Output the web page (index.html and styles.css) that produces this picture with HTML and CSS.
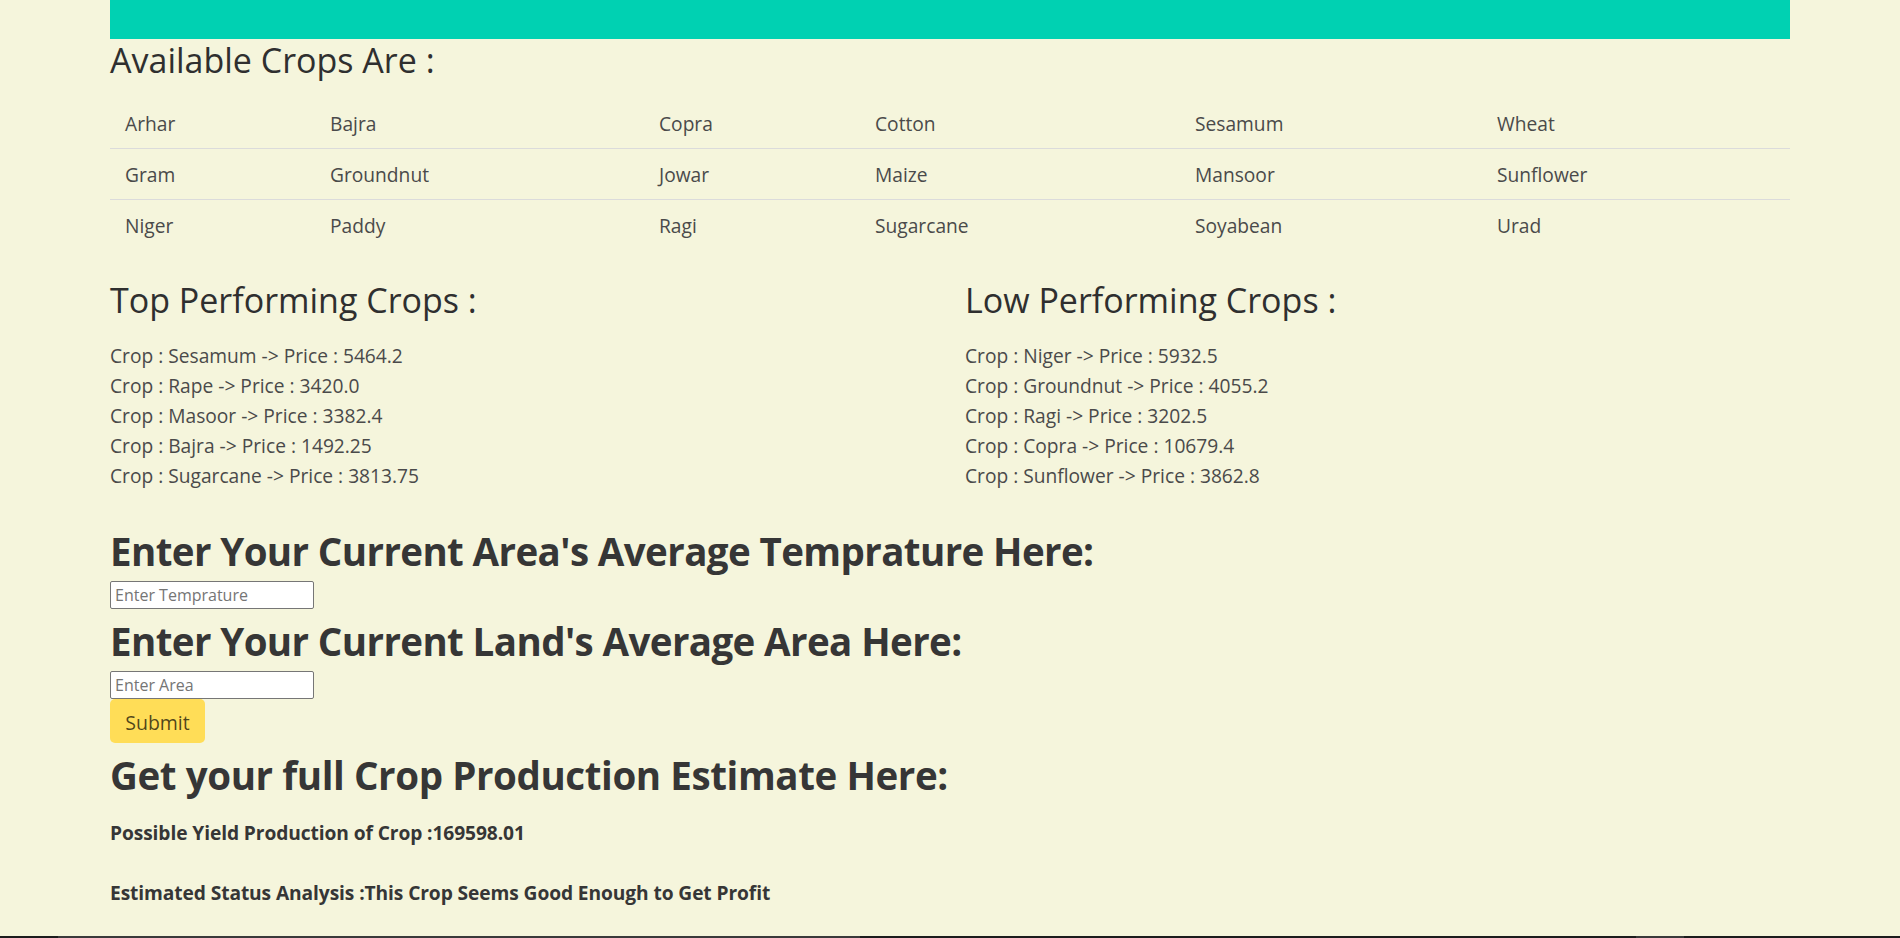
FILE: index.html
```html
<!DOCTYPE html>
<html lang="en">
<head>
<meta charset="utf-8">
<title>Crop Production Estimate</title>
<link rel="stylesheet" href="styles.css">
</head>
<body>
<div class="container">
  <div class="topbar"></div>
  <h2 class="section-title first">Available Crops Are :</h2>
  <table class="crop-table">
    <tbody>
      <tr><td>Arhar</td><td>Bajra</td><td>Copra</td><td>Cotton</td><td>Sesamum</td><td>Wheat</td></tr>
      <tr><td>Gram</td><td>Groundnut</td><td>Jowar</td><td>Maize</td><td>Mansoor</td><td>Sunflower</td></tr>
      <tr><td>Niger</td><td>Paddy</td><td>Ragi</td><td>Sugarcane</td><td>Soyabean</td><td>Urad</td></tr>
    </tbody>
  </table>

  <div class="columns">
    <div class="column">
      <h2 class="section-title">Top Performing Crops :</h2>
      <ul class="price-list">
        <li>Crop : Sesamum -&gt; Price : 5464.2</li>
        <li>Crop : Rape -&gt; Price : 3420.0</li>
        <li>Crop : Masoor -&gt; Price : 3382.4</li>
        <li>Crop : Bajra -&gt; Price : 1492.25</li>
        <li>Crop : Sugarcane -&gt; Price : 3813.75</li>
      </ul>
    </div>
    <div class="column">
      <h2 class="section-title">Low Performing Crops :</h2>
      <ul class="price-list">
        <li>Crop : Niger -&gt; Price : 5932.5</li>
        <li>Crop : Groundnut -&gt; Price : 4055.2</li>
        <li>Crop : Ragi -&gt; Price : 3202.5</li>
        <li>Crop : Copra -&gt; Price : 10679.4</li>
        <li>Crop : Sunflower -&gt; Price : 3862.8</li>
      </ul>
    </div>
  </div>

  <form class="estimate-form">
    <h1 class="big-title first-big">Enter Your Current Area's Average Temprature Here:</h1>
    <input class="field" type="text" placeholder="Enter Temprature">
    <h1 class="big-title">Enter Your Current Land's Average Area Here:</h1>
    <input class="field" type="text" placeholder="Enter Area">
    <button class="submit-btn" type="button">Submit</button>
  </form>

  <h1 class="big-title result-title">Get your full Crop Production Estimate Here:</h1>
  <p class="result first-result">Possible Yield Production of Crop :169598.01</p>
  <p class="result second-result">Estimated Status Analysis :This Crop Seems Good Enough to Get Profit</p>
</div>
<div class="bottom-strip">
  <span class="seg seg-a"></span>
  <span class="seg seg-b"></span>
</div>
</body>
</html>
```

FILE: styles.css
```css
* { box-sizing: border-box; }

html, body {
  margin: 0;
  padding: 0;
  background: #f5f5dc;
}

body {
  font-family: "Segoe UI", "Open Sans", "Noto Sans", sans-serif;
  font-size: 19.2px;
  line-height: 30px;
  color: #4a4a4a;
  min-height: 938px;
}

.container {
  width: 1680px;
  margin: 0 auto;
}

.topbar {
  height: 39px;
  background: #00d1b2;
}

.section-title {
  margin: 0;
  font-size: 34px;
  line-height: 42px;
  font-weight: 400;
  color: #2f2f2f;
}

.crop-table {
  margin-top: 17px;
  width: 1680px;
  border-collapse: collapse;
  table-layout: fixed;
}

.crop-table td {
  padding: 11px 15px 9px;
  border-bottom: 1px solid #dbdbdb;
  color: #4a4a4a;
  text-align: left;
  vertical-align: top;
}

.crop-table tr:last-child td { border-bottom: 0; }

.crop-table td:nth-child(1) { width: 205px; }
.crop-table td:nth-child(2) { width: 329px; }
.crop-table td:nth-child(3) { width: 216px; }
.crop-table td:nth-child(4) { width: 320px; }
.crop-table td:nth-child(5) { width: 302px; }
.crop-table td:nth-child(6) { width: 308px; }

.columns {
  display: grid;
  grid-template-columns: 1fr 1fr;
  column-gap: 30px;
  margin-top: 29px;
}

.price-list {
  list-style: none;
  margin: 20px 0 0;
  padding: 0;
}

.estimate-form {
  margin: 0;
  display: flex;
  flex-direction: column;
  align-items: flex-start;
}

.big-title {
  margin: 0;
  font-size: 38.5px;
  line-height: 48px;
  font-weight: 700;
  letter-spacing: -0.6px;
  color: #363636;
}

.first-big { margin-top: 36px; }

.result-title { margin-top: 8px; letter-spacing: -0.4px; }

.field {
  margin: 6px 0 8px;
  width: 204px;
  height: 28px;
  padding: 0 4px;
  border: 1px solid #767676;
  border-radius: 2px;
  background: #ffffff;
  font-family: "Segoe UI", "Open Sans", "Noto Sans", sans-serif;
  font-size: 16px;
  color: #222;
}

.field::placeholder { color: #757575; }

.estimate-form .field:last-of-type { margin-bottom: 0; }

.submit-btn {
  width: 95px;
  height: 44px;
  padding: 3px 0 0;
  border: 0;
  border-radius: 5px;
  background: #ffdd57;
  color: rgba(0, 0, 0, 0.7);
  font-family: "Segoe UI", "Open Sans", "Noto Sans", sans-serif;
  font-size: 19.5px;
  line-height: 30px;
  cursor: pointer;
}

.result {
  margin: 0;
  font-weight: 700;
  letter-spacing: -0.1px;
  color: #363636;
}

.first-result { margin-top: 19px; }
.second-result { margin-top: 30px; }

.bottom-strip {
  position: fixed;
  left: 0;
  right: 0;
  bottom: 0;
  height: 2px;
  background: #1c1c1c;
}

.seg {
  position: absolute;
  top: 0;
  height: 2px;
  background: #3a3a3a;
}

.seg-a { left: 58px; width: 802px; }
.seg-b { left: 1636px; width: 48px; }
```
